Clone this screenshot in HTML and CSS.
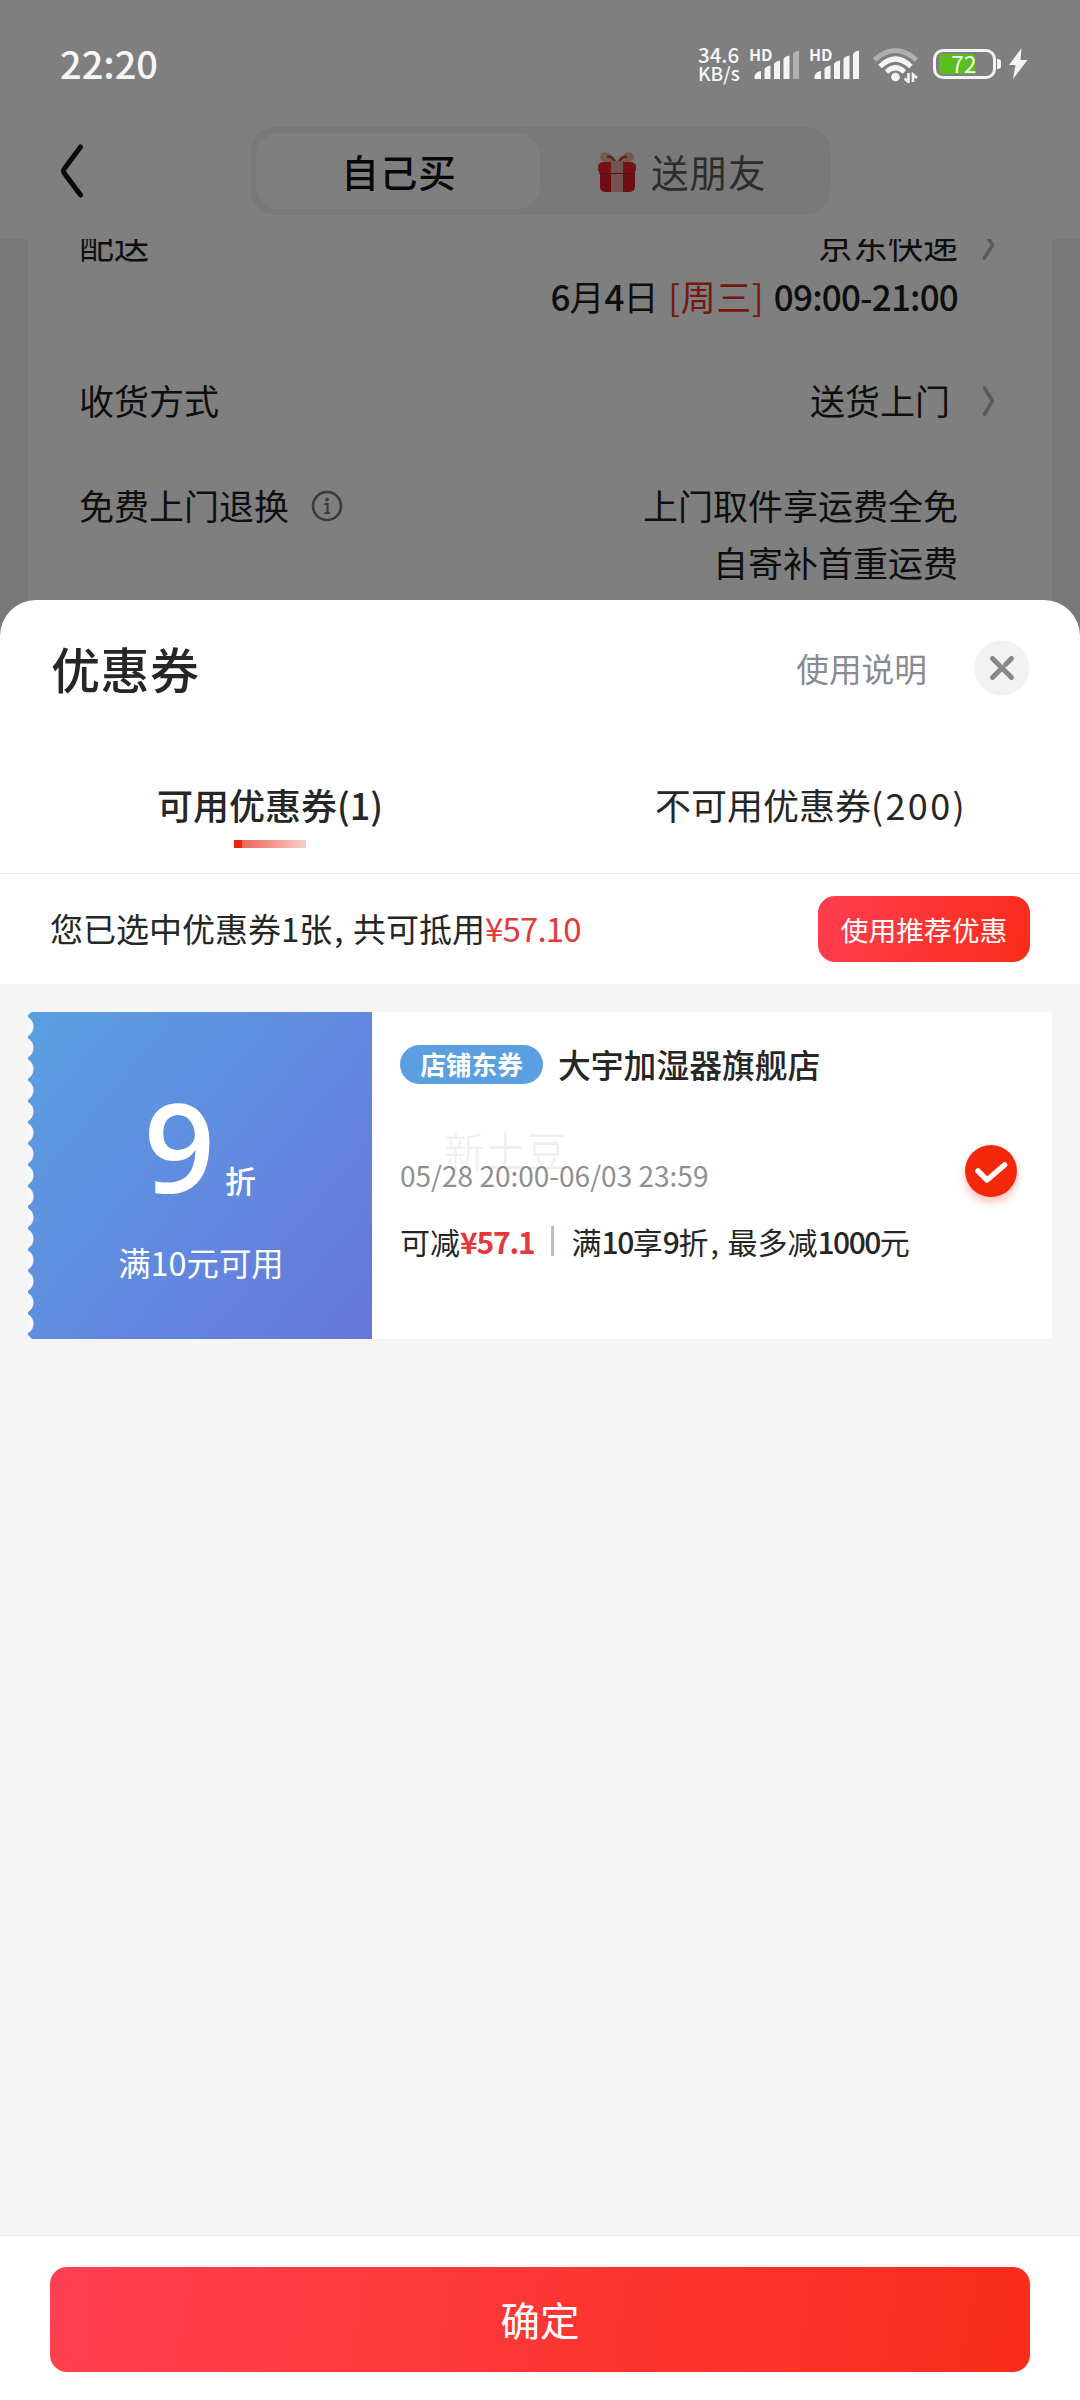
FILE: index.html
```html
<!DOCTYPE html>
<html lang="zh-CN">
<head>
<meta charset="utf-8">
<title>优惠券</title>
<link rel="stylesheet" href="styles.css">
</head>
<body>
<div class="screen">
  <main class="page">
    <header class="nav">
      <svg class="back" width="24" height="56" viewBox="0 0 24 56"><path d="M20.500 4 4.500 25.500Q2.500 28 4.500 30.500L20.500 52" fill="none" stroke="#111" stroke-width="5" stroke-linecap="round"/></svg>
      <div class="segment">
        <div class="seg seg-on">自己买</div>
        <div class="seg seg-off">
          <svg class="gift" width="40" height="42" viewBox="0 0 40 42">
            <path d="M19 12C12 13 4 11 3 7 2 2 9 0 13 3 16 5 18 8 20 11 22 8 24 5 27 3 31 0 38 2 37 7 36 11 28 13 21 12Z" fill="#ecb09c"/>
            <path d="M19 12C17 8 14 5 10 6M21 12C23 8 26 5 30 6" fill="none" stroke="#a5583f" stroke-width="2.500"/>
            <rect x="3" y="18" width="35" height="23" rx="5" fill="#dd1a26"/>
            <rect x="1" y="11" width="38" height="12" rx="5" fill="#ee2430"/>
            <rect x="14" y="10" width="12" height="31" fill="#e8a9a0"/>
            <path d="M2 22.500H38" stroke="#b31520" stroke-width="1"/>
          </svg>
          <span>送朋友</span>
        </div>
      </div>
    </header>
    <section class="order">
      <div class="row">
        <span class="label">配送</span>
        <div class="value"><p>京东快递</p><p class="when"><b>6</b>月<b>4</b>日 <em>[周三]</em> <b class="hours">09:00-21:00</b></p></div>
        <svg class="more" width="14" height="30" viewBox="0 0 14 30"><path d="M2.500 2 10.500 15 2.500 28" fill="none" stroke="#b4b4b4" stroke-width="3.600" stroke-linecap="round"/></svg>
      </div>
      <div class="row">
        <span class="label">收货方式</span>
        <div class="value value-near"><p>送货上门</p></div>
        <svg class="more" width="14" height="30" viewBox="0 0 14 30"><path d="M2.500 2 10.500 15 2.500 28" fill="none" stroke="#b4b4b4" stroke-width="3.600" stroke-linecap="round"/></svg>
      </div>
      <div class="row row-return">
        <span class="label">免费上门退换</span>
        <svg class="info" width="32" height="32" viewBox="0 0 32 32"><circle cx="16" cy="16" r="14" fill="none" stroke="#777" stroke-width="2.600"/><circle cx="16" cy="9.500" r="1.900" fill="#777"/><path d="M13.500 14H16.500V23M13.500 23H19" fill="none" stroke="#777" stroke-width="2.200"/></svg>
        <div class="value"><p>上门取件享运费全免</p><p>自寄补首重运费</p></div>
      </div>
    </section>
  </main>

  <div class="scrim"></div>

  <div class="status">
    <span class="time">22:20</span>
    <span class="speed"><span>34.6</span><span class="unit">KB/s</span></span>
    <span class="signal"><i>HD</i><svg width="45" height="30" viewBox="0 0 45 30" fill="#f4f4f4"><path d="M.500 29V26Q2 21.500 7 21V29Z"/><path d="M10.500 29V19Q12 16 16.500 15.500V29Z"/><path d="M20 29V14Q21.500 11 26 10.500V29Z"/><path d="M29.500 29V9Q31 6 35.500 5.500V29Z"/><path d="M39 29V4Q40.500 1 45 .500V29Z" fill="#b0b0b0"/></svg></span>
    <span class="signal"><i>HD</i><svg width="45" height="30" viewBox="0 0 45 30" fill="#f4f4f4"><path d="M.500 29V26Q2 21.500 7 21V29Z"/><path d="M10.500 29V19Q12 16 16.500 15.500V29Z"/><path d="M20 29V14Q21.500 11 26 10.500V29Z"/><path d="M29.500 29V9Q31 6 35.500 5.500V29Z"/><path d="M39 29V4Q40.500 1 45 .500V29Z"/></svg></span>
    <svg class="wifi" width="48" height="36" viewBox="0 0 48 36" fill="none" stroke="#f4f4f4" stroke-width="5"><path d="M2.500 13Q23 -6 44.500 13" stroke="#b0b0b0"/><path d="M8 19.500Q23.500 4.500 39 19.500"/><path d="M14.500 25Q23.500 16.500 32.500 25"/><circle cx="23.500" cy="30" r="4.300" fill="#f4f4f4" stroke="none"/><path d="M36.500 26V35L32.500 31.500M41 35V27.500L45 31" stroke-width="2.600"/></svg>
    <span class="battery"><span class="level"></span><span class="pct">72</span></span>
    <svg class="bolt" width="20" height="32" viewBox="0 0 20 32"><path d="M13.500 0 1 17H7.500L5 31 19.500 12H12.500Z" fill="#f4f4f4"/></svg>
  </div>

  <section class="sheet">
    <header class="sheet-head">
      <h1>优惠券</h1>
      <span class="help">使用说明</span>
      <svg class="close" width="56" height="56" viewBox="0 0 56 56"><circle cx="28" cy="28" r="27.500" fill="#f2f2f2"/><path d="M18.500 18.500 37.500 37.500M18.500 37.500 26.500 29.500M31.500 24.500 37.500 18.500" fill="none" stroke="#888" stroke-width="5" stroke-linecap="round"/></svg>
    </header>
    <nav class="tabs">
      <div class="tab tab-on"><span>可用优惠券(1)</span><i class="bar"></i></div>
      <div class="tab"><span>不可用优惠券<span class="count">(200)</span></span></div>
    </nav>
    <div class="summary">
      <p>您已选中优惠券1张<span class="comma">,</span> 共可抵用<span class="price">¥57.10</span></p>
      <button class="suggest">使用推荐优惠</button>
    </div>
    <div class="list">
      <article class="coupon">
        <div class="face">
          <div class="amount"><strong>9</strong><span>折</span></div>
          <div class="cond">满10元可用</div>
        </div>
        <div class="detail">
          <div class="shop"><span class="tag">店铺东券</span><span class="name">大宇加湿器旗舰店</span></div>
          <div class="date">05/28 20:00-06/03 23:59</div>
          <div class="rule"><span>可减<b class="off">¥57.1</b></span><i class="sep"></i><span>满<b>10</b>享<b>9</b>折<span class="comma">,</span> 最多减<b>1000</b>元</span></div>
          <span class="mark">新土豆</span>
        </div>
        <svg class="check" width="76" height="76" viewBox="0 0 76 76"><circle cx="38" cy="38" r="26" fill="#f2270c"/><path d="M25 38 34 47 51.500 32" fill="none" stroke="#fff" stroke-width="5.500" stroke-linecap="round" stroke-linejoin="round"/></svg>
      </article>
    </div>
    <footer class="foot"><button class="ok">确定</button></footer>
  </section>
</div>
</body>
</html>
```
FILE: styles.css
```css
* { box-sizing: border-box; margin: 0; padding: 0; }
body { background: #808080; font-family: "Noto Sans CJK SC", sans-serif; color: #262626; }
p, span, div { white-space: nowrap; }
i, em { font-style: normal; }
b { font-weight: 500; }
button { border: 0; font-family: inherit; color: #fff; }
svg { display: block; flex: none; }

.screen { position: relative; width: 1080px; height: 2400px; overflow: hidden; }
.page { height: 700px; background: #f3f3f3; }
.scrim { position: absolute; inset: 0; background: rgba(0, 0, 0, .5); }

.nav { display: flex; height: 239px; padding: 127px 0 0 60px; background: #fff; }
.back { margin-top: 16px; }
.segment { display: flex; width: 581px; height: 88px; margin-left: 166px; padding: 6px; border-radius: 26px; background: #f3f3f3; }
.seg { display: flex; align-items: center; font-size: 37.500px; line-height: 50px; padding-bottom: 1px; letter-spacing: 1px; }
.seg-on { width: 284px; padding-left: 2px; justify-content: center; border-radius: 24px; background: #fff; color: #111; font-weight: 500; }
.seg-off { padding-left: 57px; gap: 14px; color: #5a5a5a; }
.gift { margin-top: 3px; }

.order { height: 461px; margin: 0 28px; padding: 0 56px 0 51px; background: #fff; overflow: hidden; font-size: 35px; }
.row { display: flex; line-height: 53px; margin-bottom: 50px; color: #1c1c1c; }
.row:first-child { margin-top: -22px; margin-bottom: 51px; }
.row-return { line-height: 57px; }
.value { margin-left: auto; margin-right: 24px; text-align: right; }
.value-near { margin-right: 32px; }
.more { margin: 13px 0 0; }
.row-return .value { margin-right: 38px; }
.info { margin: 14px 0 0 22px; }
.when { word-spacing: 2px; margin-top: -1px; }
.when b { font-weight: 500; letter-spacing: -1px; }
.when .hours { letter-spacing: -.8px; }
.when em { color: #e93323; letter-spacing: .5px; }

.status { position: absolute; top: 0; left: 0; width: 1080px; height: 127px; display: flex; align-items: flex-start; padding: 48px 0 0 60px; color: #f6f6f6; }
.time { font-size: 38px; line-height: 30px; font-weight: 500; width: 638px; }
.speed { display: flex; flex-direction: column; width: 51px; font-size: 20.500px; line-height: 18px; margin-top: -3px; font-weight: 500; }
.unit { font-size: 19px; line-height: 19px; }
.signal { position: relative; display: block; width: 60px; padding: 2px 0 0 5px; }
.signal i { position: absolute; left: 0; top: -2px; font-size: 16px; line-height: 16px; font-weight: 700; }
.wifi { margin: -1px 0 0 3px; }
.battery { position: relative; width: 63px; height: 30px; margin: 1px 0 0 13px; border: 3.500px solid #f4f4f4; border-radius: 10px; }
.battery::after { content: ""; position: absolute; left: 61px; top: 7px; width: 4px; height: 10px; border-radius: 0 3px 3px 0; background: #f4f4f4; }
.level { display: block; width: 36px; height: 20px; margin: 1.500px 0 0 3px; border-radius: 4px 0 0 4px; background: #5abf1e; }
.pct { position: absolute; left: 15px; top: 0; font-size: 23px; line-height: 22px; font-weight: 400; }
.bolt { margin: 0 0 0 12px; }

.sheet { position: absolute; top: 600px; left: 0; width: 1080px; height: 1800px; display: flex; flex-direction: column; border-radius: 36px 36px 0 0; background: #fff; overflow: hidden; }
.sheet-head { display: flex; align-items: center; height: 136px; padding: 0 50px 0 51px; }
.sheet-head h1 { font-size: 49px; line-height: 60px; font-weight: 500; letter-spacing: .5px; }
.help { margin-left: auto; font-size: 32.700px; line-height: 40px; color: #888b92; }
.close { margin-left: 47px; }
.tabs { display: flex; height: 138px; border-bottom: 1px solid #e9e9e9; }
.tab { width: 540px; padding-top: 44px; display: flex; flex-direction: column; align-items: center; font-size: 36px; line-height: 48px; }
.tab-on { font-weight: 500; }
.count { letter-spacing: 2.300px; margin-right: -2px; }
.bar { width: 72px; height: 8px; margin-top: 12px; background: linear-gradient(90deg, #e8260f 8px, #ec6556 8px, #f8cfc9 100%); }
.summary { display: flex; align-items: center; justify-content: space-between; height: 110px; padding: 0 50px; }
.summary p { font-size: 33px; line-height: 40px; padding-bottom: 2px; }
.price { color: #e4393c; letter-spacing: -.8px; }
.comma { margin: 0 2px; }
.suggest { width: 212px; height: 66px; border-radius: 17px; background: linear-gradient(105deg, #ff3d4f, #fa2c19); font-size: 27.800px; line-height: 40px; }

.list { flex: 1; padding: 28px; background: #f5f5f5; }
.coupon { position: relative; display: flex; height: 327px; border-radius: 4px; background: #fff; }
.face { width: 344px; color: #fff; display: flex; flex-direction: column; align-items: center;
  background: radial-gradient(circle at -5.500px 50%, #f5f7f9 10.500px, rgba(245, 247, 249, 0) 11.500px) 0 4px / 8px 21.230px repeat-y,
    linear-gradient(130deg, #5a9fe1 0%, #6189df 55%, #6776d9 100%); }
.amount { display: flex; align-items: baseline; margin-top: 54px; height: 158px; line-height: 158px; }
.amount strong { font-family: "Open Sans", "Noto Sans", sans-serif; font-size: 124px; font-weight: 600; }
.amount span { font-size: 31px; font-weight: 500; margin-left: 10px; }
.cond { font-size: 32.400px; line-height: 44px; margin-top: 16px; padding-left: 2px; }
.detail { flex: 1; padding: 33px 0 0 28px; }
.shop { display: flex; height: 39px; align-items: center; }
.tag { height: 39px; width: 143px; border-radius: 20px; background: #5c9fe0; color: #fff; text-align: center; font-size: 25.700px; line-height: 37px; font-weight: 700; }
.name { margin-left: 15px; font-size: 32.800px; line-height: 40px; font-weight: 500; padding-bottom: 2px; }
.date { margin-top: 71px; font-size: 28px; line-height: 40px; color: #8f8f8f; }
.rule { display: flex; align-items: center; margin-top: 26px; font-size: 30px; line-height: 40px; }
.rule b { letter-spacing: -1.500px; }
.rule .off { color: #e4393c; font-weight: 700; letter-spacing: -1.200px; }
.sep { width: 3px; height: 30px; margin: 0 18px 0 16px; background: #bbb; }
.mark { position: absolute; left: 416px; top: 112px; font-size: 41px; line-height: 50px; color: rgba(0, 0, 0, .06); }
.check { position: absolute; right: 23px; top: 121px; filter: drop-shadow(0 5px 4px rgba(242, 39, 12, .3)); }

.foot { height: 165px; padding: 31px 50px 0; border-top: 1px solid #e8e8e8; background: #fff; }
.ok { display: block; width: 980px; height: 105px; border-radius: 17px; background: linear-gradient(100deg, #ff4050, #fa2c19); font-size: 39.500px; line-height: 60px; padding-bottom: 2px; }
```
